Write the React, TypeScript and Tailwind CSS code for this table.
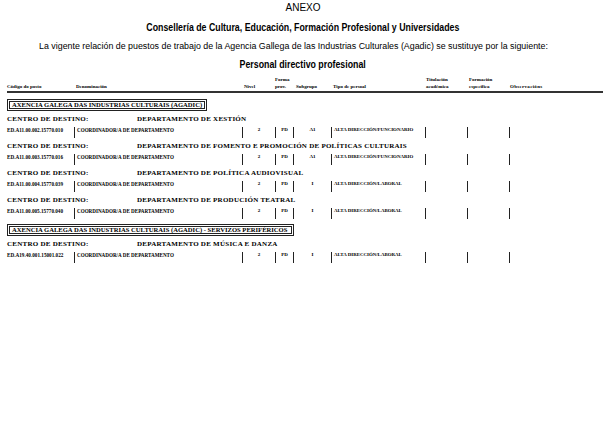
import React from 'react';

type Row = {
  centro: string;
  code: string;
  subgrupo: string;
  tipo: string;
};

type Block = {
  title: string;
  width: string;
  rows: Row[];
};

const blocks: Block[] = [
  {
    title: 'AXENCIA GALEGA DAS INDUSTRIAS CULTURAIS (AGADIC)',
    width: 'w-[200px]',
    rows: [
      { centro: 'DEPARTAMENTO DE XESTIÓN', code: 'ED.A11.00.002.15770.010', subgrupo: 'A1', tipo: 'ALTA DIRECCIÓN/FUNCIONARIO' },
      { centro: 'DEPARTAMENTO DE FOMENTO E PROMOCIÓN DE POLÍTICAS CULTURAIS', code: 'ED.A11.00.003.15770.016', subgrupo: 'A1', tipo: 'ALTA DIRECCIÓN/FUNCIONARIO' },
      { centro: 'DEPARTAMENTO DE POLÍTICA AUDIOVISUAL', code: 'ED.A11.00.004.15770.039', subgrupo: 'I', tipo: 'ALTA DIRECCIÓN/LABORAL' },
      { centro: 'DEPARTAMENTO DE PRODUCIÓN TEATRAL', code: 'ED.A11.00.005.15770.040', subgrupo: 'I', tipo: 'ALTA DIRECCIÓN/LABORAL' },
    ],
  },
  {
    title: 'AXENCIA GALEGA DAS INDUSTRIAS CULTURAIS (AGADIC) - SERVIZOS PERIFÉRICOS',
    width: 'w-[287px]',
    rows: [
      { centro: 'DEPARTAMENTO DE MÚSICA E DANZA', code: 'ED.A19.40.001.15001.022', subgrupo: 'I', tipo: 'ALTA DIRECCIÓN/LABORAL' },
    ],
  },
];

const grid = 'grid grid-cols-[67px_168px_33px_18px_38px_94px_42px_42px_94px]';
const serif = "font-['Liberation_Serif',serif]";

function HeaderRow() {
  return (
    <div className={`${grid} ${serif} mt-[5px] w-[596px] ml-[7px] border-b-2 border-[#333] font-bold text-[5px] leading-[7px] items-end pb-[1px]`}>
      <span>Código do posto</span>
      <span className="pl-[2px]">Denominación</span>
      <span className="pl-[2px]">Nivel</span>
      <span>Forma<br />prov.</span>
      <span className="pl-[3px]">Subgrupo</span>
      <span className="pl-[2px]">Tipo de persoal</span>
      <span className="pl-[1px]">Titulación<br />académica</span>
      <span className="pl-[2px]">Formación<br />específica</span>
      <span className="pl-[1px] tracking-[0.3px]">Observacións</span>
    </div>
  );
}

function DataRow({ row }: { row: Row }) {
  const cell = 'h-[11px] border-l border-[#222]';
  return (
    <>
      <div className={`${serif} h-[9px] leading-[9px] mt-[4px] ml-[7px] flex font-bold text-[7px] tracking-[0.25px]`}>
        <span className="w-[130px]">CENTRO DE DESTINO:</span>
        <span>{row.centro}</span>
      </div>
      <div className={`${grid} ${serif} mt-[3px] w-[596px] ml-[7px] font-bold text-[5px] leading-[6px] whitespace-nowrap`}>
        <span className="h-[11px] text-[5.2px]">{row.code}</span>
        <span className={`${cell} pl-[2px] text-[5.1px]`}>COORDINADOR/A DE DEPARTAMENTO</span>
        <span className={`${cell} text-center`}>2</span>
        <span className={`${cell} text-center`}>PD</span>
        <span className={`${cell} text-center`}>{row.subgrupo}</span>
        <span className={`${cell} pl-[2px] text-[4.9px]`}>{row.tipo}</span>
        <span className={cell} />
        <span className={cell} />
        <span className={cell} />
      </div>
    </>
  );
}

export default function App() {
  return (
    <div className="w-[615px] h-[439px] bg-white text-black overflow-hidden font-['Liberation_Sans',Arial,sans-serif]">
      <p className="pt-[2px] pr-[9px] text-center text-[10px] leading-[12px]">ANEXO</p>
      <p className="mt-[8px] pr-[9px] text-center font-bold text-[10px] leading-[12px]">
        <span className="inline-block scale-x-[0.88]">
          Consellería de Cultura, Educación, Formación Profesional y Universidades
        </span>
      </p>
      <p className="mt-[6px] pr-[28px] text-center text-[8.85px] leading-[12px]">
        La vigente relación de puestos de trabajo de la Agencia Gallega de las Industrias Culturales (Agadic) se sustituye por la siguiente:
      </p>
      <p className="mt-[7px] pr-[9px] text-center font-bold text-[10px] leading-[12px]">
        <span className="inline-block scale-x-[0.88]">Personal directivo profesional</span>
      </p>

      <HeaderRow />

      {blocks.map((b, i) => (
        <div key={b.title} className={i === 0 ? 'mt-[6px]' : 'mt-[5px]'}>
          <div className={`${serif} ${b.width} ml-[7px] h-[12px] border-[3px] border-double border-[#222] font-bold text-[6.6px] leading-[6px] pl-[2px] whitespace-nowrap`}>
            {b.title}
          </div>
          {b.rows.map((r) => (
            <DataRow key={r.code} row={r} />
          ))}
        </div>
      ))}
    </div>
  );
}
